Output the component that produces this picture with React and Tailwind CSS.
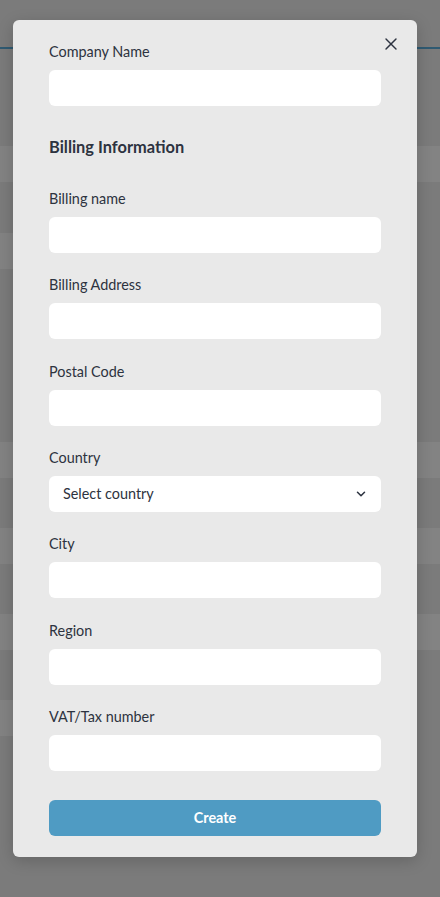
import React from "react";
import { X, ChevronDown } from "lucide-react";

const fields = [
    { label: "Billing name" },
    { label: "Billing Address" },
    { label: "Postal Code" },
    { label: "Country", select: true },
    { label: "City" },
    { label: "Region" },
    { label: "VAT/Tax number" },
];

function Field({ label, select }) {
    return (
        <div className="flex flex-col">
            <label className="text-[14.4px] leading-[22px] text-[#2d3340] mb-[7px]">{label}</label>
            {select ? (
                <div className="h-[36px] rounded-md bg-white flex items-center justify-between pl-[14px] pr-[13px]">
                    <span className="text-[14.4px] text-[#2d3340]">Select country</span>
                    <ChevronDown className="w-[14px] h-[14px] text-[#2d3340]" strokeWidth={2.6} />
                </div>
            ) : (
                <input className="h-[36px] rounded-md bg-white outline-none px-3 text-[14.4px]" />
            )}
        </div>
    );
}

export default function App() {
    return (
        <div
            className="relative w-full h-[897px] overflow-hidden bg-[#7b7b7b]"
            style={{ fontFamily: "Lato, 'Open Sans', sans-serif" }}
        >
            {/* page behind the backdrop */}
            <div className="h-[47px]" />
            <div className="h-[2px] bg-[#2f5a72]" />
            <div className="h-[97px]" />
            <div className="h-[36px] bg-[#838383]" />
            <div className="h-[51px]" />
            <div className="h-[36px] w-[300px] bg-[#838383]" />
            <div className="h-[173px]" />
            <div className="h-[36px] bg-[#838383]" />
            <div className="h-[50px]" />
            <div className="h-[36px] bg-[#838383]" />
            <div className="h-[50px]" />
            <div className="h-[36px] bg-[#838383]" />
            <div className="h-[50px]" />
            <div className="h-[36px] w-[300px] bg-[#838383]" />

            {/* modal */}
            <div className="absolute left-[13px] top-[20px] w-[404px] h-[837px] rounded-md bg-[#e9e9e9] shadow-[0_4px_16px_rgba(0,0,0,0.18)] px-[36px] pt-[21px] pb-[21px] flex flex-col">
                <button className="absolute right-[16px] top-[14px] text-[#2d3340]">
                    <X className="w-[20px] h-[20px]" strokeWidth={1.7} />
                </button>
                <Field label="Company Name" />
                <h3 className="mt-[29px] mb-[29px] text-[16.4px] leading-[24px] font-bold text-[#2d3340]">
                    Billing Information
                </h3>
                <div className="flex flex-col gap-[21.33px]">
                    {fields.map((f) => (
                        <Field key={f.label} {...f} />
                    ))}
                </div>
                <button className="mt-[29px] h-[36px] rounded-md bg-[#4f9bc3] text-white font-bold text-[14.4px] leading-[20px]">
                    Create
                </button>
            </div>
        </div>
    );
}
